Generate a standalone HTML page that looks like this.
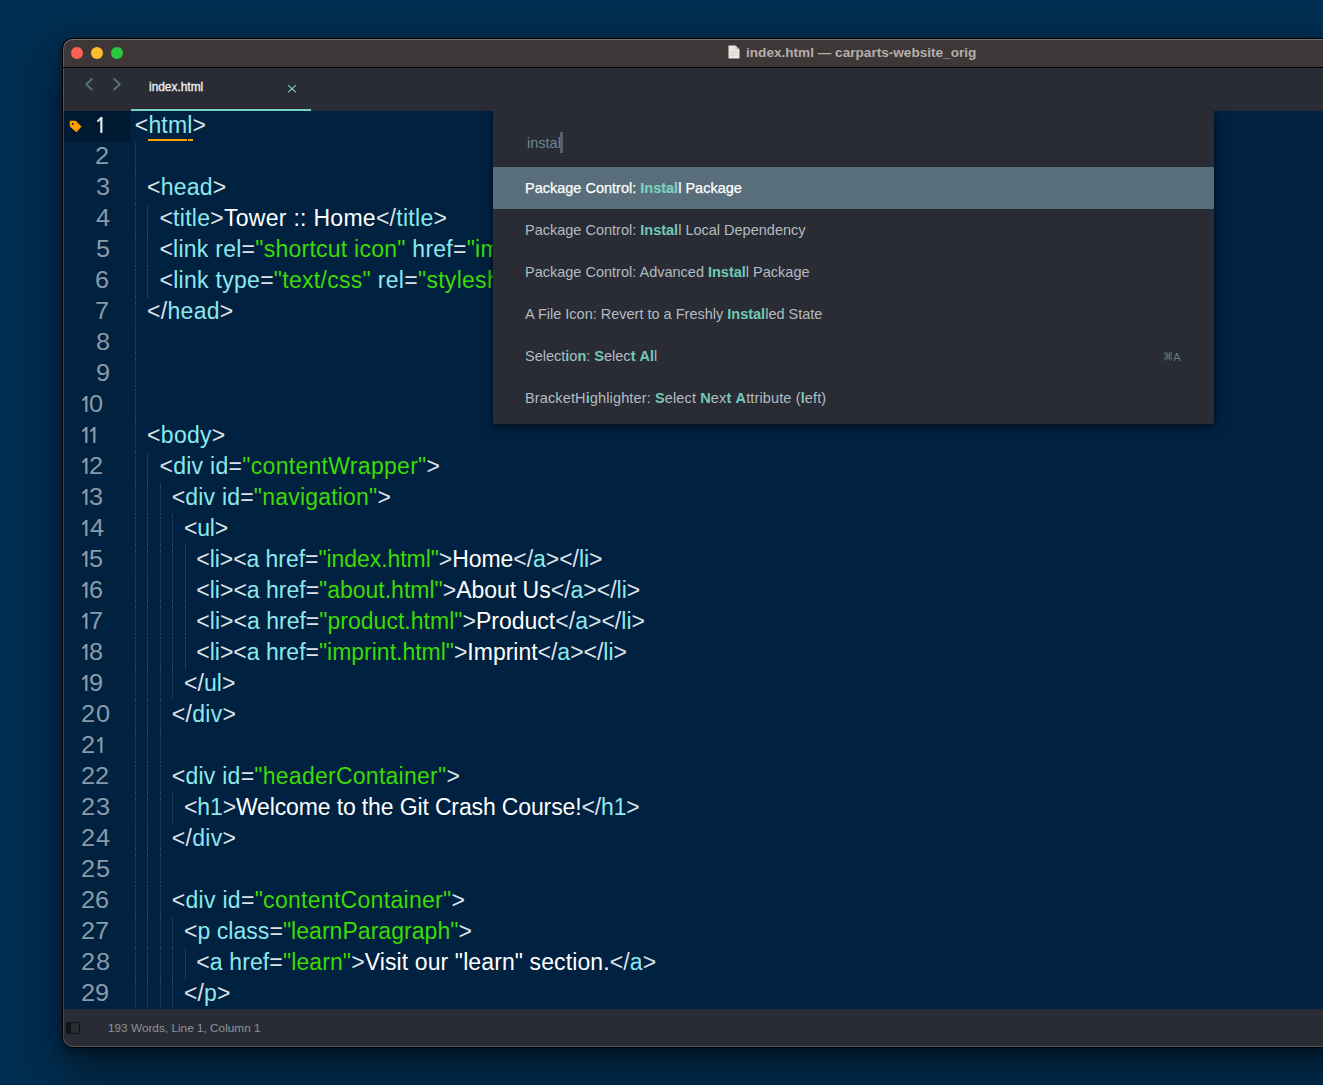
<!DOCTYPE html>
<html><head><meta charset="utf-8"><style>
*{margin:0;padding:0;box-sizing:border-box}
html,body{width:1323px;height:1085px;overflow:hidden}
body{background:#002d50;font-family:"Liberation Sans",sans-serif;position:relative}
.abs{position:absolute}
#win{position:absolute;left:62px;top:38px;width:1300px;height:1010px;border-radius:11px 0 0 11px;background:#000;
 box-shadow:0 22px 50px rgba(0,0,0,0.5), 0 4px 12px rgba(0,0,0,0.3)}
#title{position:absolute;left:63px;top:39px;width:1280px;height:28px;background:#3d3737;border-radius:10px 0 0 0;
 box-shadow:inset 0 1px 0 rgba(255,255,255,0.28), inset 1px 0 0 rgba(255,255,255,0.18)}
.tl{position:absolute;top:47px;width:12px;height:12px;border-radius:50%}
#tabbar{position:absolute;left:63px;top:68px;width:1280px;height:43px;background:#292c34;box-shadow:inset 1px 0 0 rgba(255,255,255,0.2)}
#editor{position:absolute;left:63px;top:111px;width:1280px;height:898px;background:#002140;overflow:hidden;box-shadow:inset 1px 0 0 rgba(160,190,220,0.28)}
#status{position:absolute;left:63px;top:1009px;width:1280px;height:38px;background:#292c34;border-radius:0 0 0 10px;
 box-shadow:inset 0 -1px 0 #55575e, inset 1px 0 0 rgba(255,255,255,0.15)}
.ln{position:absolute;height:31px;line-height:31px;font-size:23px;white-space:pre;color:#fff}
.p{color:#dde2e6}.t{color:#8ce8ee}.s{color:#3dda05}.x{color:#ffffff}
.num{position:absolute;height:31px;line-height:31px;font-size:23px;color:#8a9aa8;transform:scaleX(1.1);transform-origin:0 0}
.gd{position:absolute;width:1px;height:31px;background:repeating-linear-gradient(to bottom, rgba(120,140,160,0.45) 0 1px, transparent 1px 2px)}
#panelsh{position:absolute;left:493px;top:111px;width:721px;height:313px;border-radius:0 0 3px 3px;
 box-shadow:0 3px 12px rgba(0,0,0,0.5), 0 0 3px rgba(0,0,0,0.35);clip-path:inset(0 -40px -40px -40px)}
#panel{position:absolute;left:493px;top:111px;width:721px;height:313px;background:#292c35;border-radius:0 0 2px 2px}
.row{position:absolute;left:0;width:721px;height:42px;line-height:42px;font-size:14.5px;color:#b3bbc0;padding-left:32px;white-space:pre}
.row.sel{background:#586e7a;color:#fff;-webkit-text-stroke:0.25px #fff}
.hl{color:#72c9b7;font-weight:bold;-webkit-text-stroke:0}
.kbd{position:absolute;right:33.5px;top:0.5px;font-size:11px;color:#607b87}
.sel .hl{-webkit-text-stroke:0.2px #7bd0be;color:#7bd0be}

</style></head><body>
<div id="win"></div>
<div id="title"></div>
<div class="tl" style="left:71px;background:#fe5f57"></div>
<div class="tl" style="left:91px;background:#febc2e"></div>
<div class="tl" style="left:111px;background:#28c840"></div>
<div class="abs" style="left:746px;top:44px;font-size:13.6px;font-weight:bold;color:#b5aeab;line-height:17px;white-space:pre">index.html — carparts-website_orig</div>
<svg class="abs" style="left:728px;top:45px" width="12" height="14" viewBox="0 0 12 14"><path d="M0.5 0.5h7l4 4v9h-11z" fill="#ebe8e6"/><path d="M7.5 0.5v4h4" fill="#c4c0bd"/><path d="M2.5 6.5h6M2.5 8.5h6M2.5 10.5h6" stroke="#d2cfcc" stroke-width="0.8"/></svg>
<div id="tabbar"></div>
<svg class="abs" style="left:80px;top:72px" width="48" height="24" viewBox="0 0 48 24"><path d="M11.8 7L6.3 12.3L11.8 17.6" fill="none" stroke="#56707c" stroke-width="2" stroke-linecap="round" stroke-linejoin="round"/><path d="M34.3 7L39.7 12.3L34.3 17.6" fill="none" stroke="#56707c" stroke-width="2" stroke-linecap="round" stroke-linejoin="round"/></svg>
<div class="abs" style="left:149px;top:80px;font-size:11.9px;color:#eeeeee;-webkit-text-stroke:0.35px #eeeeee;line-height:14px">index.html</div>
<svg class="abs" style="left:287.5px;top:85px" width="8" height="7.5" viewBox="0 0 8 7.5"><path d="M0.6 0.6l6.8 6.3M7.4 0.6l-6.8 6.3" stroke="#7ccdc2" stroke-width="1.2" stroke-linecap="round"/></svg>
<div class="abs" style="left:131px;top:109px;width:180px;height:2px;background:#78d0c8"></div>
<div id="editor"></div>
<div class="abs" style="left:64px;top:111px;width:67px;height:31px;background:#001a33"></div>
<div class="ln" style="top:110px;left:134.8px;letter-spacing:0.160px"><span class="p">&lt;</span><span class="t">html</span><span class="p">&gt;</span></div>
<svg class="abs" style="left:96.6px;top:116.9px" width="7" height="17" viewBox="0 0 7 17"><path d="M4.35 0.1V15.9" stroke="#e9eaeb" stroke-width="2.2"/><path d="M4.3 1.1L1 3.9" stroke="#e9eaeb" stroke-width="2" stroke-linecap="round"/></svg>
<div class="gd" style="top:142px;left:135px"></div>
<div class="num" style="top:141.3px;left:95.4px;color:#8a9aa8">2</div>
<div class="ln" style="top:172px;left:147.1px;letter-spacing:0.200px"><span class="p">&lt;</span><span class="t">head</span><span class="p">&gt;</span></div>
<div class="gd" style="top:173px;left:135px"></div>
<div class="num" style="top:172.3px;left:95.7px;color:#8a9aa8">3</div>
<div class="ln" style="top:203px;left:159.4px;letter-spacing:0.278px"><span class="p">&lt;</span><span class="t">title</span><span class="p">&gt;</span><span class="x">Tower :: Home</span><span class="p">&lt;/</span><span class="t">title</span><span class="p">&gt;</span></div>
<div class="gd" style="top:204px;left:135px"></div>
<div class="gd" style="top:204px;left:147px"></div>
<div class="num" style="top:203.3px;left:96.1px;color:#8a9aa8">4</div>
<div class="ln" style="top:234px;left:159.4px;letter-spacing:0.250px"><span class="p">&lt;</span><span class="t">link</span><span class="x"> </span><span class="t">rel</span><span class="p">=</span><span class="s">&quot;shortcut icon&quot;</span><span class="x"> </span><span class="t">href</span><span class="p">=</span><span class="s">&quot;img/favicon.ico&quot;</span><span class="p">&gt;</span></div>
<div class="gd" style="top:235px;left:135px"></div>
<div class="gd" style="top:235px;left:147px"></div>
<div class="num" style="top:234.3px;left:95.7px;color:#8a9aa8">5</div>
<div class="ln" style="top:265px;left:159.4px;letter-spacing:0.290px"><span class="p">&lt;</span><span class="t">link</span><span class="x"> </span><span class="t">type</span><span class="p">=</span><span class="s">&quot;text/css&quot;</span><span class="x"> </span><span class="t">rel</span><span class="p">=</span><span class="s">&quot;stylesheet&quot;</span><span class="x"> </span><span class="t">href</span><span class="p">=</span><span class="s">&quot;css/styles.css&quot;</span><span class="p">&gt;</span></div>
<div class="gd" style="top:266px;left:135px"></div>
<div class="gd" style="top:266px;left:147px"></div>
<div class="num" style="top:265.3px;left:95.4px;color:#8a9aa8">6</div>
<div class="ln" style="top:296px;left:147.1px;letter-spacing:0.283px"><span class="p">&lt;/</span><span class="t">head</span><span class="p">&gt;</span></div>
<div class="gd" style="top:297px;left:135px"></div>
<div class="num" style="top:296.3px;left:95.4px;color:#8a9aa8">7</div>
<div class="gd" style="top:328px;left:135px"></div>
<div class="num" style="top:327.3px;left:95.6px;color:#8a9aa8">8</div>
<div class="gd" style="top:359px;left:135px"></div>
<div class="num" style="top:358.3px;left:95.5px;color:#8a9aa8">9</div>
<div class="gd" style="top:390px;left:135px"></div>
<svg class="abs" style="left:81.9px;top:395.9px" width="7" height="17" viewBox="0 0 7 17"><path d="M4.35 0.1V15.9" stroke="#8a9aa8" stroke-width="2.2"/><path d="M4.3 1.1L1 3.9" stroke="#8a9aa8" stroke-width="2" stroke-linecap="round"/></svg>
<div class="num" style="top:389.3px;left:89.2px;color:#8a9aa8">0</div>
<div class="ln" style="top:420px;left:147.1px;letter-spacing:0.280px"><span class="p">&lt;</span><span class="t">body</span><span class="p">&gt;</span></div>
<div class="gd" style="top:421px;left:135px"></div>
<svg class="abs" style="left:81.9px;top:426.9px" width="7" height="17" viewBox="0 0 7 17"><path d="M4.35 0.1V15.9" stroke="#8a9aa8" stroke-width="2.2"/><path d="M4.3 1.1L1 3.9" stroke="#8a9aa8" stroke-width="2" stroke-linecap="round"/></svg>
<svg class="abs" style="left:90.1px;top:426.9px" width="7" height="17" viewBox="0 0 7 17"><path d="M4.35 0.1V15.9" stroke="#8a9aa8" stroke-width="2.2"/><path d="M4.3 1.1L1 3.9" stroke="#8a9aa8" stroke-width="2" stroke-linecap="round"/></svg>
<div class="ln" style="top:451px;left:159.4px;letter-spacing:0.292px"><span class="p">&lt;</span><span class="t">div</span><span class="x"> </span><span class="t">id</span><span class="p">=</span><span class="s">&quot;contentWrapper&quot;</span><span class="p">&gt;</span></div>
<div class="gd" style="top:452px;left:135px"></div>
<div class="gd" style="top:452px;left:147px"></div>
<svg class="abs" style="left:81.9px;top:457.9px" width="7" height="17" viewBox="0 0 7 17"><path d="M4.35 0.1V15.9" stroke="#8a9aa8" stroke-width="2.2"/><path d="M4.3 1.1L1 3.9" stroke="#8a9aa8" stroke-width="2" stroke-linecap="round"/></svg>
<div class="num" style="top:451.3px;left:88.9px;color:#8a9aa8">2</div>
<div class="ln" style="top:482px;left:171.7px;letter-spacing:0.195px"><span class="p">&lt;</span><span class="t">div</span><span class="x"> </span><span class="t">id</span><span class="p">=</span><span class="s">&quot;navigation&quot;</span><span class="p">&gt;</span></div>
<div class="gd" style="top:483px;left:135px"></div>
<div class="gd" style="top:483px;left:147px"></div>
<div class="gd" style="top:483px;left:160px"></div>
<svg class="abs" style="left:81.9px;top:488.9px" width="7" height="17" viewBox="0 0 7 17"><path d="M4.35 0.1V15.9" stroke="#8a9aa8" stroke-width="2.2"/><path d="M4.3 1.1L1 3.9" stroke="#8a9aa8" stroke-width="2" stroke-linecap="round"/></svg>
<div class="num" style="top:482.3px;left:89.2px;color:#8a9aa8">3</div>
<div class="ln" style="top:513px;left:184.0px;letter-spacing:-0.233px"><span class="p">&lt;</span><span class="t">ul</span><span class="p">&gt;</span></div>
<div class="gd" style="top:514px;left:135px"></div>
<div class="gd" style="top:514px;left:147px"></div>
<div class="gd" style="top:514px;left:160px"></div>
<div class="gd" style="top:514px;left:172px"></div>
<svg class="abs" style="left:81.9px;top:519.9px" width="7" height="17" viewBox="0 0 7 17"><path d="M4.35 0.1V15.9" stroke="#8a9aa8" stroke-width="2.2"/><path d="M4.3 1.1L1 3.9" stroke="#8a9aa8" stroke-width="2" stroke-linecap="round"/></svg>
<div class="num" style="top:513.3px;left:89.6px;color:#8a9aa8">4</div>
<div class="ln" style="top:544px;left:196.3px;letter-spacing:-0.059px"><span class="p">&lt;</span><span class="t">li</span><span class="p">&gt;</span><span class="p">&lt;</span><span class="t">a</span><span class="x"> </span><span class="t">href</span><span class="p">=</span><span class="s">&quot;index.html&quot;</span><span class="p">&gt;</span><span class="x">Home</span><span class="p">&lt;/</span><span class="t">a</span><span class="p">&gt;</span><span class="p">&lt;/</span><span class="t">li</span><span class="p">&gt;</span></div>
<div class="gd" style="top:545px;left:135px"></div>
<div class="gd" style="top:545px;left:147px"></div>
<div class="gd" style="top:545px;left:160px"></div>
<div class="gd" style="top:545px;left:172px"></div>
<div class="gd" style="top:545px;left:185px"></div>
<svg class="abs" style="left:81.9px;top:550.9px" width="7" height="17" viewBox="0 0 7 17"><path d="M4.35 0.1V15.9" stroke="#8a9aa8" stroke-width="2.2"/><path d="M4.3 1.1L1 3.9" stroke="#8a9aa8" stroke-width="2" stroke-linecap="round"/></svg>
<div class="num" style="top:544.3px;left:89.2px;color:#8a9aa8">5</div>
<div class="ln" style="top:575px;left:196.3px;letter-spacing:-0.007px"><span class="p">&lt;</span><span class="t">li</span><span class="p">&gt;</span><span class="p">&lt;</span><span class="t">a</span><span class="x"> </span><span class="t">href</span><span class="p">=</span><span class="s">&quot;about.html&quot;</span><span class="p">&gt;</span><span class="x">About Us</span><span class="p">&lt;/</span><span class="t">a</span><span class="p">&gt;</span><span class="p">&lt;/</span><span class="t">li</span><span class="p">&gt;</span></div>
<div class="gd" style="top:576px;left:135px"></div>
<div class="gd" style="top:576px;left:147px"></div>
<div class="gd" style="top:576px;left:160px"></div>
<div class="gd" style="top:576px;left:172px"></div>
<div class="gd" style="top:576px;left:185px"></div>
<svg class="abs" style="left:81.9px;top:581.9px" width="7" height="17" viewBox="0 0 7 17"><path d="M4.35 0.1V15.9" stroke="#8a9aa8" stroke-width="2.2"/><path d="M4.3 1.1L1 3.9" stroke="#8a9aa8" stroke-width="2" stroke-linecap="round"/></svg>
<div class="num" style="top:575.3px;left:88.9px;color:#8a9aa8">6</div>
<div class="ln" style="top:606px;left:196.3px;letter-spacing:0.017px"><span class="p">&lt;</span><span class="t">li</span><span class="p">&gt;</span><span class="p">&lt;</span><span class="t">a</span><span class="x"> </span><span class="t">href</span><span class="p">=</span><span class="s">&quot;product.html&quot;</span><span class="p">&gt;</span><span class="x">Product</span><span class="p">&lt;/</span><span class="t">a</span><span class="p">&gt;</span><span class="p">&lt;/</span><span class="t">li</span><span class="p">&gt;</span></div>
<div class="gd" style="top:607px;left:135px"></div>
<div class="gd" style="top:607px;left:147px"></div>
<div class="gd" style="top:607px;left:160px"></div>
<div class="gd" style="top:607px;left:172px"></div>
<div class="gd" style="top:607px;left:185px"></div>
<svg class="abs" style="left:81.9px;top:612.9px" width="7" height="17" viewBox="0 0 7 17"><path d="M4.35 0.1V15.9" stroke="#8a9aa8" stroke-width="2.2"/><path d="M4.3 1.1L1 3.9" stroke="#8a9aa8" stroke-width="2" stroke-linecap="round"/></svg>
<div class="num" style="top:606.3px;left:88.9px;color:#8a9aa8">7</div>
<div class="ln" style="top:637px;left:196.3px;letter-spacing:-0.014px"><span class="p">&lt;</span><span class="t">li</span><span class="p">&gt;</span><span class="p">&lt;</span><span class="t">a</span><span class="x"> </span><span class="t">href</span><span class="p">=</span><span class="s">&quot;imprint.html&quot;</span><span class="p">&gt;</span><span class="x">Imprint</span><span class="p">&lt;/</span><span class="t">a</span><span class="p">&gt;</span><span class="p">&lt;/</span><span class="t">li</span><span class="p">&gt;</span></div>
<div class="gd" style="top:638px;left:135px"></div>
<div class="gd" style="top:638px;left:147px"></div>
<div class="gd" style="top:638px;left:160px"></div>
<div class="gd" style="top:638px;left:172px"></div>
<div class="gd" style="top:638px;left:185px"></div>
<svg class="abs" style="left:81.9px;top:643.9px" width="7" height="17" viewBox="0 0 7 17"><path d="M4.35 0.1V15.9" stroke="#8a9aa8" stroke-width="2.2"/><path d="M4.3 1.1L1 3.9" stroke="#8a9aa8" stroke-width="2" stroke-linecap="round"/></svg>
<div class="num" style="top:637.3px;left:89.1px;color:#8a9aa8">8</div>
<div class="ln" style="top:668px;left:184.0px;letter-spacing:0.050px"><span class="p">&lt;/</span><span class="t">ul</span><span class="p">&gt;</span></div>
<div class="gd" style="top:669px;left:135px"></div>
<div class="gd" style="top:669px;left:147px"></div>
<div class="gd" style="top:669px;left:160px"></div>
<div class="gd" style="top:669px;left:172px"></div>
<svg class="abs" style="left:81.9px;top:674.9px" width="7" height="17" viewBox="0 0 7 17"><path d="M4.35 0.1V15.9" stroke="#8a9aa8" stroke-width="2.2"/><path d="M4.3 1.1L1 3.9" stroke="#8a9aa8" stroke-width="2" stroke-linecap="round"/></svg>
<div class="num" style="top:668.3px;left:89.0px;color:#8a9aa8">9</div>
<div class="ln" style="top:699px;left:171.7px;letter-spacing:0.320px"><span class="p">&lt;/</span><span class="t">div</span><span class="p">&gt;</span></div>
<div class="gd" style="top:700px;left:135px"></div>
<div class="gd" style="top:700px;left:147px"></div>
<div class="gd" style="top:700px;left:160px"></div>
<div class="num" style="top:699.3px;left:81.4px;color:#8a9aa8">2</div>
<div class="num" style="top:699.3px;left:95.6px;color:#8a9aa8">0</div>
<div class="gd" style="top:731px;left:135px"></div>
<div class="gd" style="top:731px;left:147px"></div>
<div class="gd" style="top:731px;left:160px"></div>
<div class="num" style="top:730.3px;left:81.4px;color:#8a9aa8">2</div>
<svg class="abs" style="left:96.5px;top:736.9px" width="7" height="17" viewBox="0 0 7 17"><path d="M4.35 0.1V15.9" stroke="#8a9aa8" stroke-width="2.2"/><path d="M4.3 1.1L1 3.9" stroke="#8a9aa8" stroke-width="2" stroke-linecap="round"/></svg>
<div class="ln" style="top:761px;left:171.7px;letter-spacing:0.256px"><span class="p">&lt;</span><span class="t">div</span><span class="x"> </span><span class="t">id</span><span class="p">=</span><span class="s">&quot;headerContainer&quot;</span><span class="p">&gt;</span></div>
<div class="gd" style="top:762px;left:135px"></div>
<div class="gd" style="top:762px;left:147px"></div>
<div class="gd" style="top:762px;left:160px"></div>
<div class="num" style="top:761.3px;left:81.4px;color:#8a9aa8">2</div>
<div class="num" style="top:761.3px;left:95.3px;color:#8a9aa8">2</div>
<div class="ln" style="top:792px;left:184.0px;letter-spacing:-0.135px"><span class="p">&lt;</span><span class="t">h1</span><span class="p">&gt;</span><span class="x">Welcome to the Git Crash Course!</span><span class="p">&lt;/</span><span class="t">h1</span><span class="p">&gt;</span></div>
<div class="gd" style="top:793px;left:135px"></div>
<div class="gd" style="top:793px;left:147px"></div>
<div class="gd" style="top:793px;left:160px"></div>
<div class="gd" style="top:793px;left:172px"></div>
<div class="num" style="top:792.3px;left:81.4px;color:#8a9aa8">2</div>
<div class="num" style="top:792.3px;left:95.6px;color:#8a9aa8">3</div>
<div class="ln" style="top:823px;left:171.7px;letter-spacing:0.320px"><span class="p">&lt;/</span><span class="t">div</span><span class="p">&gt;</span></div>
<div class="gd" style="top:824px;left:135px"></div>
<div class="gd" style="top:824px;left:147px"></div>
<div class="gd" style="top:824px;left:160px"></div>
<div class="num" style="top:823.3px;left:81.4px;color:#8a9aa8">2</div>
<div class="num" style="top:823.3px;left:96.0px;color:#8a9aa8">4</div>
<div class="gd" style="top:855px;left:135px"></div>
<div class="gd" style="top:855px;left:147px"></div>
<div class="gd" style="top:855px;left:160px"></div>
<div class="num" style="top:854.3px;left:81.4px;color:#8a9aa8">2</div>
<div class="num" style="top:854.3px;left:95.6px;color:#8a9aa8">5</div>
<div class="ln" style="top:885px;left:171.7px;letter-spacing:0.296px"><span class="p">&lt;</span><span class="t">div</span><span class="x"> </span><span class="t">id</span><span class="p">=</span><span class="s">&quot;contentContainer&quot;</span><span class="p">&gt;</span></div>
<div class="gd" style="top:886px;left:135px"></div>
<div class="gd" style="top:886px;left:147px"></div>
<div class="gd" style="top:886px;left:160px"></div>
<div class="num" style="top:885.3px;left:81.4px;color:#8a9aa8">2</div>
<div class="num" style="top:885.3px;left:95.3px;color:#8a9aa8">6</div>
<div class="ln" style="top:916px;left:184.0px;letter-spacing:0.044px"><span class="p">&lt;</span><span class="t">p</span><span class="x"> </span><span class="t">class</span><span class="p">=</span><span class="s">&quot;learnParagraph&quot;</span><span class="p">&gt;</span></div>
<div class="gd" style="top:917px;left:135px"></div>
<div class="gd" style="top:917px;left:147px"></div>
<div class="gd" style="top:917px;left:160px"></div>
<div class="gd" style="top:917px;left:172px"></div>
<div class="num" style="top:916.3px;left:81.4px;color:#8a9aa8">2</div>
<div class="num" style="top:916.3px;left:95.3px;color:#8a9aa8">7</div>
<div class="ln" style="top:947px;left:196.3px;letter-spacing:0.111px"><span class="p">&lt;</span><span class="t">a</span><span class="x"> </span><span class="t">href</span><span class="p">=</span><span class="s">&quot;learn&quot;</span><span class="p">&gt;</span><span class="x">Visit our &quot;learn&quot; section.</span><span class="p">&lt;/</span><span class="t">a</span><span class="p">&gt;</span></div>
<div class="gd" style="top:948px;left:135px"></div>
<div class="gd" style="top:948px;left:147px"></div>
<div class="gd" style="top:948px;left:160px"></div>
<div class="gd" style="top:948px;left:172px"></div>
<div class="gd" style="top:948px;left:185px"></div>
<div class="num" style="top:947.3px;left:81.4px;color:#8a9aa8">2</div>
<div class="num" style="top:947.3px;left:95.5px;color:#8a9aa8">8</div>
<div class="ln" style="top:978px;left:184.0px;letter-spacing:0.100px"><span class="p">&lt;/</span><span class="t">p</span><span class="p">&gt;</span></div>
<div class="gd" style="top:979px;left:135px"></div>
<div class="gd" style="top:979px;left:147px"></div>
<div class="gd" style="top:979px;left:160px"></div>
<div class="gd" style="top:979px;left:172px"></div>
<div class="num" style="top:978.3px;left:81.4px;color:#8a9aa8">2</div>
<div class="num" style="top:978.3px;left:95.4px;color:#8a9aa8">9</div>
<svg class="abs" style="left:64.5px;top:114px" width="20" height="22" viewBox="0 0 20 22"><path d="M5 7L10.6 7L16.2 12.6L11.4 18L5.1 12.4Z" fill="#ffa000" stroke="#ffa000" stroke-width="0.6" stroke-linejoin="round"/><rect x="7" y="9" width="1.7" height="1.7" fill="#001a33"/></svg>
<div class="abs" style="left:148px;top:139px;width:39px;height:2px;background:#ffa000"></div>
<div class="abs" style="left:188px;top:139px;width:5px;height:2px;background:#ffa000"></div>
<div id="panelsh"></div>
<div id="panel">
 <div class="abs" style="left:34px;top:20px;font-size:14.5px;color:#6f8593;line-height:24px">instal</div>
 <div class="abs" style="left:67px;top:21px;width:3px;height:21px;background:#58616b"></div>
 <div class="row sel" style="top:56px">Package Control: <span class="hl">Instal</span>l Package</div>
 <div class="row" style="top:98px">Package Control: <span class="hl">Instal</span>l Local Dependency</div>
 <div class="row" style="top:140px">Package Control: Advanced <span class="hl">Instal</span>l Package</div>
 <div class="row" style="top:182px">A File Icon: Revert to a Freshly <span class="hl">Instal</span>led State</div>
 <div class="row" style="top:224px">Select<span class="hl">i</span>o<span class="hl">n</span>: <span class="hl">S</span>elec<span class="hl">t</span> <span class="hl">Al</span>l<span class="kbd"><svg width="8.4" height="8.4" viewBox="0 0 8.4 8.4" style="vertical-align:0px;margin-right:1px"><g fill="none" stroke="#607b87" stroke-width="0.8"><path d="M3.2 1.7V6.7M5.2 1.7V6.7M1.7 3.2H6.7M1.7 5.2H6.7"/><circle cx="1.7" cy="1.7" r="1.4"/><circle cx="6.7" cy="1.7" r="1.4"/><circle cx="1.7" cy="6.7" r="1.4"/><circle cx="6.7" cy="6.7" r="1.4"/></g></svg>A</span></div>
 <div class="row" style="top:266px;letter-spacing:0.13px">BracketH<span class="hl">i</span>ghlighter: <span class="hl">S</span>elect <span class="hl">N</span>ex<span class="hl">t</span> <span class="hl">A</span>ttribute (<span class="hl">l</span>eft)</div>
</div>
<div id="status"></div>
<svg class="abs" style="left:66px;top:1022px" width="14" height="12" viewBox="0 0 14 12"><rect x="0.5" y="0.5" width="13" height="11" rx="1.5" fill="none" stroke="#111216"/><rect x="1" y="1" width="4" height="10" fill="#111216"/></svg>
<div class="abs" style="left:108px;top:1021px;font-size:11.8px;color:#8b949a;line-height:14px;white-space:pre">193 Words, Line 1, Column 1</div>

</body></html>
